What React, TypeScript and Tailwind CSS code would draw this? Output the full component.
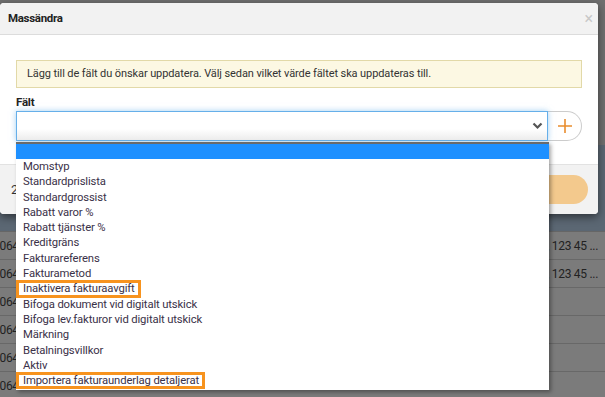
const rows = [0, 1, 2, 3, 4, 5];

const options = [
    "Momstyp",
    "Standardprislista",
    "Standardgrossist",
    "Rabatt varor %",
    "Rabatt tjänster %",
    "Kreditgräns",
    "Fakturareferens",
    "Fakturametod",
    "Inaktivera fakturaavgift",
    "Bifoga dokument vid digitalt utskick",
    "Bifoga lev.fakturor vid digitalt utskick",
    "Märkning",
    "Betalningsvillkor",
    "Aktiv",
    "Importera fakturaunderlag detaljerat",
];

const marked = ["Inaktivera fakturaavgift", "Importera fakturaunderlag detaljerat"];

export default function App() {
    return (
        <div className="relative w-[605px] h-[397px] overflow-hidden bg-[#6f6f6f] font-['Roboto',sans-serif] text-[#333]">
            {/* page behind the overlay */}
            <div className="flex flex-col">
                <div className="h-[145px]" />
                <div className="h-[87px] bg-[#5b6773] border-b border-[#666]" />
                {rows.map((r) => (
                    <div key={r} className="h-[28px] flex items-center justify-between border-b border-[#686868] bg-[#7b7b7b] text-[12px] tracking-[-0.3px] text-[#222]">
                        <span className="-ml-[7px]">1064</span>
                        <span className="mr-[7px]">{r < 2 ? ", 123 45 ..." : ""}</span>
                    </div>
                ))}
            </div>

            {/* modal */}
            <div className="absolute left-0 top-[3px] w-[598px] rounded-[4px] bg-white shadow-[0_3px_9px_rgba(0,0,0,0.5)]">
                <div className="h-[32px] flex items-center justify-between pl-[8px] pr-[5px] bg-[#f2f2f2] border-b border-[#dcdcdc] rounded-t-[4px]">
                    <span className="text-[11.5px] tracking-[-0.3px] font-bold text-[#222]">Massändra</span>
                    <span className="text-[16px] leading-none text-[#c8c8c8]">×</span>
                </div>
                <div className="px-[16px] pt-[25px] pb-[23px]">
                    <div className="h-[28px] flex items-center px-[10px] bg-[#fcf8e3] border border-[#e2d9a8] text-[11px] tracking-[-0.1px] text-[#333]">
                        Lägg till de fält du önskar uppdatera. Välj sedan vilket värde fältet ska uppdateras till.
                    </div>
                    <div className="mt-[7px] text-[11.5px] leading-[14px] tracking-[-0.2px] font-bold text-[#222]">Fält</div>
                    <div className="mt-[2px] flex">
                        <div className="relative flex-1 h-[30px] border border-[#66afe9] bg-gradient-to-b from-white from-60% to-[#ececec] shadow-[0_0_6px_rgba(102,175,233,0.6)]">
                            <svg className="absolute right-[4px] top-[10px]" width="11" height="8" viewBox="0 0 11 8">
                                <path d="M1.5 1.5 L5.5 5.5 L9.5 1.5" stroke="#555" strokeWidth="2.2" fill="none" />
                            </svg>
                        </div>
                        <div className="w-[34px] h-[30px] flex items-center justify-center border border-l-0 border-[#ccc] rounded-r-full bg-white">
                            <svg width="16" height="16" viewBox="0 0 16 16">
                                <path d="M8 1 V15 M1 8 H15" stroke="#e98d2e" strokeWidth="1.6" />
                            </svg>
                        </div>
                    </div>
                </div>
                <div className="h-[50px] flex items-center justify-between pl-[11px] pr-[10px] bg-[#f2f2f2] border-t border-[#e2e2e2] rounded-b-[4px]">
                    <span className="text-[13px] text-[#333]">2</span>
                    <div className="w-[120px] h-[29px] rounded-full bg-[#f3c98d]" />
                </div>
            </div>

            {/* open select list */}
            <div className="absolute left-[16px] top-[142px] w-[533px] h-[248px] bg-white border-t-2 border-[#6b6b6b] shadow-[2px_2px_4px_rgba(0,0,0,0.35)]">
                <div className="h-[15px] bg-[#1e90ff]" />
                <div className="flex flex-col items-start pl-[7px] text-[11.3px] leading-[15.3px] tracking-[-0.15px] text-[#3a3148]">
                    {options.map((o) => (
                        <div key={o} className="relative">
                            {o}
                            {marked.includes(o) && (
                                <div className="absolute -left-[7px] -right-[6px] -top-[1px] -bottom-[1px] border-[3px] border-[#f7931e]" />
                            )}
                        </div>
                    ))}
                </div>
            </div>
        </div>
    );
}
